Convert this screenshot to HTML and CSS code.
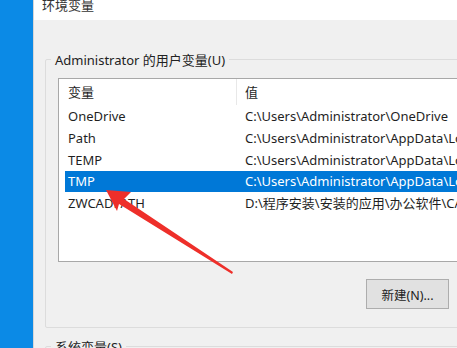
FILE: index.html
```html
<!DOCTYPE html>
<html lang="zh-CN">
<head>
    <meta charset="UTF-8">
    <meta name="viewport" content="width=device-width, initial-scale=1.0">
    <title>环境变量</title>
    <link rel="stylesheet" href="styles.css">
</head>
<body>
    <div class="desktop">
        <div class="desktop-edge"></div>

        <div class="dialog">
            <div class="titlebar">环境变量</div>

            <div class="dialog-body">
                <fieldset class="group">
                    <legend>Administrator 的用户变量(U)</legend>

                    <div class="listview">
                        <div class="lv-row lv-header">
                            <div class="col-name">变量</div>
                            <div class="col-value">值</div>
                        </div>
                        <div class="lv-row">
                            <div class="col-name">OneDrive</div>
                            <div class="col-value">C:\Users\Administrator\OneDrive</div>
                        </div>
                        <div class="lv-row">
                            <div class="col-name">Path</div>
                            <div class="col-value">C:\Users\Administrator\AppData\Local\Microsoft\WindowsApps;</div>
                        </div>
                        <div class="lv-row">
                            <div class="col-name">TEMP</div>
                            <div class="col-value">C:\Users\Administrator\AppData\Local\Temp</div>
                        </div>
                        <div class="lv-row selected">
                            <div class="col-name">TMP</div>
                            <div class="col-value">C:\Users\Administrator\AppData\Local\Temp</div>
                        </div>
                        <div class="lv-row">
                            <div class="col-name">ZWCADPATH</div>
                            <div class="col-value">D:\程序安装\安装的应用\办公软件\CAD</div>
                        </div>
                    </div>

                    <div class="button-row">
                        <button>新建(N)...</button>
                        <button>编辑(E)...</button>
                        <button>删除(D)</button>
                    </div>
                </fieldset>

                <fieldset class="group">
                    <legend>系统变量(S)</legend>
                </fieldset>
            </div>
        </div>
    </div>

    <!-- 标注箭头 -->
    <svg class="arrow" width="457" height="348" viewBox="0 0 457 348">
        <polygon points="106,190 131,192 124,199 233,272 232,274 119,204 117,211" fill="#ee2f2a"/>
    </svg>
</body>
</html>
```

FILE: styles.css
```css
:root {
    --desktop-blue: #0b8ae6;
    --dialog-bg: #f0f0f0;
    --select-blue: #0078d7;
    --list-border: #a8a8a8;
    --group-line: #dcdcdc;
}

* {
    box-sizing: border-box;
    margin: 0;
    padding: 0;
}

html, body {
    width: 457px;
    height: 348px;
    overflow: hidden;
}

body {
    font-family: "Noto Sans", "Noto Sans CJK SC", sans-serif;
    font-size: 13px;
    color: #1f1f1f;
    background: var(--dialog-bg);
    position: relative;
}

.desktop {
    display: flex;
    height: 348px;
}

.desktop-edge {
    width: 33px;
    flex-shrink: 0;
    background: var(--desktop-blue);
}

.dialog {
    width: 520px;
    flex-shrink: 0;
    background: var(--dialog-bg);
    border-left: 1px solid #d6d6d6;
}

.titlebar {
    height: 20px;
    background: #fff;
    padding-left: 8px;
    line-height: 10px;
    font-size: 13px;
    color: #333;
}

.dialog-body {
    padding: 30px 0 0 11px;
}

.group {
    border: 1px solid var(--group-line);
    border-radius: 2px;
    padding: 9px 0 18px 12px;
    margin-bottom: 9px;
}

.group legend {
    margin-left: -7px;
    padding: 0 4px;
    font-size: 13px;
    color: #222;
}

.listview {
    width: 440px;
    height: 184px;
    background: #fff;
    border: 1px solid var(--list-border);
    padding-left: 6px;
}

.lv-row {
    display: flex;
    height: 22px;
    line-height: 22px;
    white-space: nowrap;
}

.lv-header {
    height: 26px;
    line-height: 26px;
}

.lv-header .col-name {
    border-right: 1px solid #e8e8e8;
}

.col-name {
    width: 172px;
    padding-left: 3px;
    flex-shrink: 0;
}

.col-value {
    padding-left: 8px;
}

.lv-row.selected {
    background: var(--select-blue);
    color: #fff;
    height: 21px;
    line-height: 21px;
}

.button-row {
    display: flex;
    gap: 8px;
    margin: 17px 0 0 308px;
}

button {
    width: 83px;
    height: 30px;
    flex-shrink: 0;
    background: #e1e1e1;
    border: 1px solid #adadad;
    font-family: inherit;
    font-size: 12.5px;
    color: #222;
}

.arrow {
    position: absolute;
    left: 0;
    top: 0;
    pointer-events: none;
}
```
